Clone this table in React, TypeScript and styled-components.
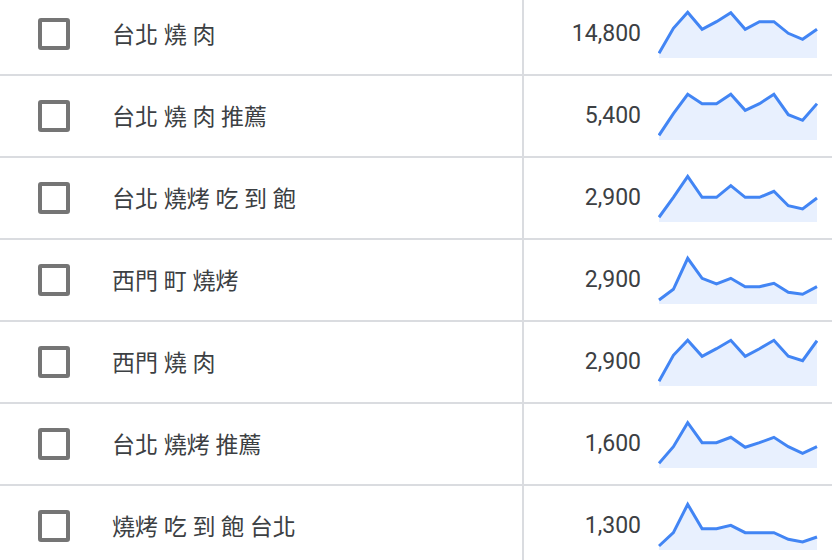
import React from 'react';
import styled, { createGlobalStyle } from 'styled-components';

const GlobalStyle = createGlobalStyle`
	html, body {
		margin: 0;
		padding: 0;
		background: #fff;
		overflow: hidden;
	}
	body {
		font-family: Roboto, "Noto Sans CJK TC", sans-serif;
		color: #3c4043;
	}
`

const List = styled.div`
	width: 832px;
	margin-top: -6px;
`
const Row = styled.div`
	display: flex;
	height: 80px;
	border-bottom: 2px solid #dadce0;
`
const CheckCell = styled.div`
	width: 112px;
	padding-left: 38px;
	box-sizing: border-box;
	display: flex;
	align-items: center;
`
const Checkbox = styled.span`
	width: 32px;
	height: 32px;
	box-sizing: border-box;
	border: 4px solid #757575;
	border-radius: 3px;
`
const Keyword = styled.div`
	width: 410px;
	padding-bottom: 3px;
	box-sizing: border-box;
	display: flex;
	align-items: center;
	font-size: 23px;
	white-space: nowrap;
`
const Volume = styled.div`
	width: 136px;
	box-sizing: border-box;
	border-left: 2px solid #dadce0;
	padding: 0 17px 1px 0;
	display: flex;
	align-items: center;
	justify-content: flex-end;
	font-size: 23px;
`
const Chart = styled.svg`
	width: 160px;
	height: 50px;
	margin-top: 14px;
	flex-shrink: 0;
`

type Item = { keyword: string; volume: string; trend: number[] };

const items: Item[] = [
	{ keyword: '台北 燒 肉', volume: '14,800', trend: [45.3, 20.3, 4.3, 21.3, 13.7, 4.7, 21.3, 13.7, 13.7, 25.3, 31.3, 21.3] },
	{ keyword: '台北 燒 肉 推薦', volume: '5,400', trend: [45.3, 23.7, 4.3, 13.7, 13.7, 4.3, 20.3, 13.7, 4.3, 24.7, 30.3, 13.7] },
	{ keyword: '台北 燒烤 吃 到 飽', volume: '2,900', trend: [45.3, 25.3, 4.3, 25.3, 25.3, 13.7, 25.3, 25.3, 19.3, 33.7, 37, 26] },
	{ keyword: '西門 町 燒烤', volume: '2,900', trend: [46, 35.3, 4.3, 24.3, 30, 24.3, 32.7, 32.7, 29.3, 38.3, 40.3, 32.7] },
	{ keyword: '西門 燒 肉', volume: '2,900', trend: [45.3, 19.3, 4.3, 20.3, 12.7, 4.3, 20.3, 12.7, 4.3, 20.3, 24.7, 4.7] },
	{ keyword: '台北 燒烤 推薦', volume: '1,600', trend: [45.3, 28.7, 4.7, 24.7, 24.7, 19.3, 29.3, 24.7, 19.3, 28.7, 35.3, 28.7] },
	{ keyword: '燒烤 吃 到 飽 台北', volume: '1,300', trend: [46, 32.7, 4.3, 28.7, 28.7, 25.3, 32.7, 32.7, 32.7, 39.3, 42, 37] },
];

const Sparkline = ({ trend }: { trend: number[] }) => {
	const step = 158 / (trend.length - 1);
	const pts = trend.map((y, i) => `${(1 + i * step).toFixed(1)},${y}`);
	const area = `M1,50 L${pts.join(' L')} L159,50 Z`;
	return (
		<Chart viewBox="0 0 160 50">
			<path d={area} fill="#e8f0fe" />
			<polyline points={pts.join(' ')} fill="none" stroke="#4285f4" strokeWidth={3} strokeLinejoin="miter" />
		</Chart>
	);
};

const App = () => {
	return (
		<React.Fragment>
			<GlobalStyle />
			<List>
				{items.map((item, i) => (
					<Row key={i}>
						<CheckCell>
							<Checkbox />
						</CheckCell>
						<Keyword>{item.keyword}</Keyword>
						<Volume>{item.volume}</Volume>
						<Sparkline trend={item.trend} />
					</Row>
				))}
			</List>
		</React.Fragment>
	);
};

export default App;
